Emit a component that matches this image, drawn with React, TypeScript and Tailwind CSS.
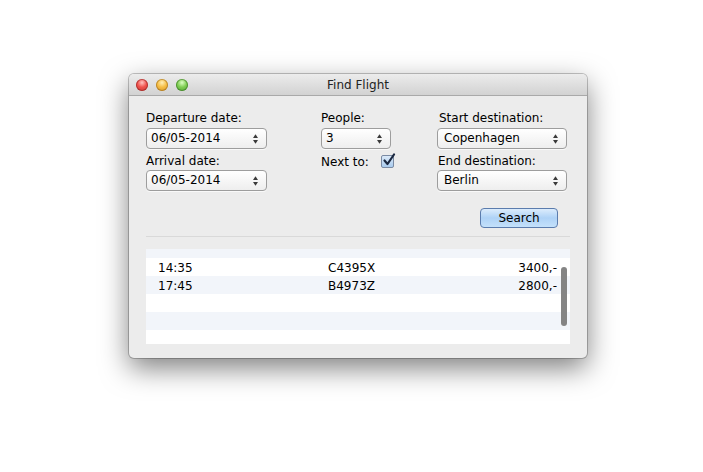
import React from "react";

function Arrows() {
  return (
    <svg width="5" height="10" viewBox="0 0 5 10" className="shrink-0">
      <polygon points="0,4 2.5,0.2 5,4" fill="#3a3a3a" />
      <polygon points="0,6 5,6 2.5,9.8" fill="#3a3a3a" />
    </svg>
  );
}

function Select({ value, className }: { value: string; className: string }) {
  return (
    <div
      className={
        "h-[21px] flex items-center justify-between pl-[4px] pr-[8px] border border-[#9d9d9d] rounded-[4px] bg-gradient-to-b from-[#ffffff] to-[#eeeeee] shadow-[0_1px_0_rgba(255,255,255,0.7)] text-[12px] leading-[19px] text-black " +
        className
      }
    >
      <span>{value}</span>
      <Arrows />
    </div>
  );
}

function Light({ className }: { className: string }) {
  return <div className={"w-[12px] h-[12px] rounded-full " + className} />;
}

const rows = [
  { kind: "stripe", h: "h-[9px]" },
  { kind: "white", time: "14:35", code: "C4395X", price: "3400,-" },
  { kind: "stripe", time: "17:45", code: "B4973Z", price: "2800,-" },
  { kind: "white" },
  { kind: "stripe" },
  { kind: "white" },
];

export default function App() {
  return (
    <div className="w-[703px] h-[472px] bg-white pl-[129px] pt-[74px] font-['DejaVu_Sans',sans-serif] text-black">
      <div className="w-[458px] h-[284px] rounded-[5px] bg-[#ececec] overflow-hidden flex flex-col shadow-[0_10px_28px_rgba(0,0,0,0.5),0_0_0_1px_rgba(0,0,0,0.22)]">
        {/* Title bar */}
        <div className="h-[22px] shrink-0 grid grid-cols-[1fr_auto_1fr] items-center bg-gradient-to-b from-[#ececec] to-[#d2d2d2] border-b border-[#a9a9a9]">
          <div className="flex items-center gap-2 pl-[7px]">
            <Light className="bg-[radial-gradient(circle_at_50%_30%,#ffc4c0_0%,#f0524c_45%,#c23a35_100%)] shadow-[inset_0_0_0_1px_rgba(140,30,30,0.55)]" />
            <Light className="bg-[radial-gradient(circle_at_50%_30%,#fff0b8_0%,#f6be44_45%,#d1932a_100%)] shadow-[inset_0_0_0_1px_rgba(150,100,20,0.55)]" />
            <Light className="bg-[radial-gradient(circle_at_50%_30%,#dcffc4_0%,#7fce52_45%,#52a135_100%)] shadow-[inset_0_0_0_1px_rgba(50,110,30,0.55)]" />
          </div>
          <div className="text-[12px] leading-[16px] text-[#222]">Find Flight</div>
          <div />
        </div>

        {/* Content */}
        <div className="flex flex-col px-[17px] pt-[14px]">
          <div className="flex">
            {/* Column 1 */}
            <div className="w-[175px] flex flex-col">
              <div className="h-4 text-[12px] leading-4">Departure date:</div>
              <Select value="06/05-2014" className="w-[121px] mt-[2px]" />
              <div className="h-4 text-[12px] leading-4 mt-[4px]">Arrival date:</div>
              <Select value="06/05-2014" className="w-[121px] mt-[1px]" />
            </div>
            {/* Column 2 */}
            <div className="w-[116px] flex flex-col">
              <div className="h-4 text-[12px] leading-4">People:</div>
              <Select value="3" className="w-[70px] mt-[2px]" />
              <div className="flex items-start mt-[5px]">
                <span className="w-[60px] text-[12px] leading-4">Next to:</span>
                <div className="relative w-[13px] h-[13px] mt-[1px] border border-[#7a8aa3] rounded-[2px] bg-gradient-to-b from-[#dbe9f8] to-[#a9cbee]">
                  <svg
                    width="14"
                    height="14"
                    viewBox="0 0 14 14"
                    className="absolute left-[0px] top-[-3px]"
                  >
                    <path
                      d="M2.5 7.5 L5.5 11 L12 1.5"
                      fill="none"
                      stroke="#1b2840"
                      strokeWidth="2.2"
                      strokeLinecap="round"
                      strokeLinejoin="round"
                    />
                  </svg>
                </div>
              </div>
            </div>
            {/* Column 3 */}
            <div className="w-[130px] flex flex-col">
              <div className="h-4 text-[12px] leading-4 pl-[2px]">Start destination:</div>
              <Select value="Copenhagen" className="w-[130px] mt-[2px] pl-[6px]" />
              <div className="h-4 text-[12px] leading-4 mt-[4px] pl-[1px]">End destination:</div>
              <Select value="Berlin" className="w-[130px] mt-[1px] pl-[6px]" />
            </div>
          </div>

          <div className="flex justify-end mt-[17px] pr-[12px]">
            <button className="w-[78px] h-[20px] border border-[#5b7cad] rounded-[4px] bg-gradient-to-b from-[#dcecfc] via-[#aed2f6] to-[#c4e1fb] text-[12px] leading-[18px] text-black">
              Search
            </button>
          </div>

          <div className="h-px bg-[#d9d9d9] mt-[8px]" />

          <div className="relative mt-[12px] h-[95px] bg-white overflow-hidden">
            {rows.map((r, i) => (
              <div
                key={i}
                className={
                  (r.kind === "stripe" ? "bg-[#f2f5fa] " : "bg-white ") +
                  (r.h ? r.h : "h-[18px]") +
                  " flex text-[12px] leading-[16px] pt-[2px]"
                }
              >
                {r.time && (
                  <>
                    <span className="pl-[12px] w-[182px]">{r.time}</span>
                    <span className="flex-1">{r.code}</span>
                    <span className="pr-[13px]">{r.price}</span>
                  </>
                )}
              </div>
            ))}
            <div className="absolute right-[3px] top-[18px] w-[6px] h-[59px] rounded-full bg-[#848484]" />
          </div>
        </div>
      </div>
    </div>
  );
}
